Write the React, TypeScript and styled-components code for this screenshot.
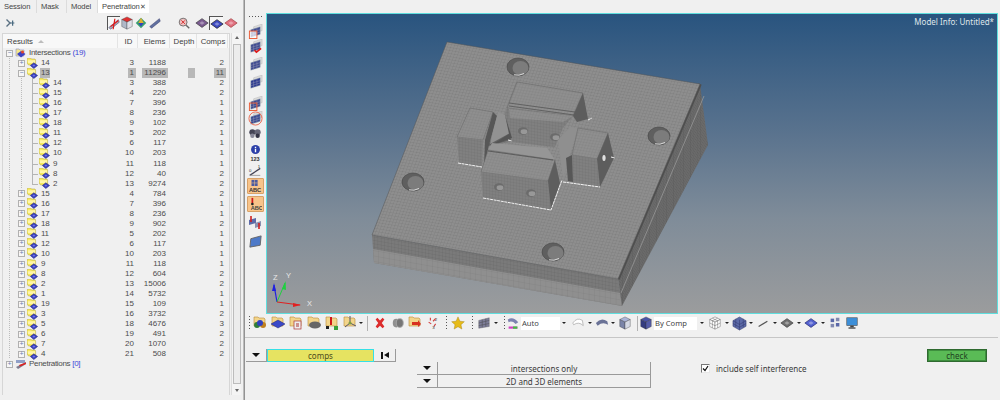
import React from 'react';
import styled, { createGlobalStyle } from 'styled-components';

const Global = createGlobalStyle`
  html, body { margin: 0; padding: 0; background: #f0f0f0; overflow: hidden; }
  #root { width: 1000px; height: 400px; }
`;

const Page = styled.div`
  width: 1000px; height: 400px; display: flex; background: #f0f0f0; overflow: hidden;
  font-family: "Liberation Sans", Arial, sans-serif; color: #4c4c4c;
`;

/* ---------- left panel ---------- */
const LeftPanel = styled.aside`width: 243px; flex: none; display: flex; flex-direction: column;`;
const Splitter = styled.div`width: 2px; flex: none; background: linear-gradient(90deg, #d0d0d0, #7f7f7f);`;
const Tabs = styled.nav`height: 13px; display: flex; background: #f0f0f0; font-size: 7.6px; letter-spacing: -.1px; color: #444;`;
const Tab = styled.div<{ $w: number; $active?: boolean }>`
  width: ${p => p.$w}px; display: flex; align-items: center; justify-content: space-between; flex: none;
  padding: 0 4px 0 4px; box-sizing: border-box;
  background: ${p => (p.$active ? '#fff' : 'transparent')};
  border-right: ${p => (p.$active ? 'none' : '1px solid #dcdcdc')};
`;
const TabClose = styled.span`font-size: 7px;`;
const TabIconRow = styled.div`height: 20px; display: flex; align-items: center; background: #f0f0f0;`;
const IconSlot = styled.span<{ $w: number; $pressed?: boolean }>`
  width: ${p => p.$w}px; height: 14px; flex: none; display: flex; align-items: center; justify-content: center;
  box-sizing: border-box;
  ${p => p.$pressed && 'border-left: 1px solid #555; border-top: 1px solid #555; background: #f7f7f7;'}
`;
const ResultsArea = styled.div`flex: 1; display: flex; padding: 0 2px 5px 2px; min-height: 0;`;
const TreeBox = styled.div`flex: 1; border: 1px solid #d6d6d6; border-bottom: none; display: flex; flex-direction: column; min-width: 0;`;
const HeaderRow = styled.div`
  height: 14px; display: grid; grid-template-columns: 115px 20px 32px 27px 31px 1fr; background: #f8f8f8;
  font-size: 7.8px; color: #3e3e3e; align-items: center;
`;
const HeadCell = styled.div<{ $align?: string }>`
  height: 100%; display: flex; align-items: center; box-sizing: border-box; padding: 0 2px 0 4px;
  justify-content: ${p => p.$align ?? 'center'}; border-right: 1px solid #e4e4e4; gap: 5px;
`;
const SortMark = styled.span`
  width: 0; height: 0; border-left: 3px solid transparent; border-right: 3px solid transparent; border-bottom: 3px solid #bdbdbd;
`;
const Rows = styled.div`flex: 1; background: #f0f0f0;`;
const Row = styled.div`
  height: 10.06px; display: grid; grid-template-columns: 115px 20px 32px 27px 31px 1fr; font-size: 8px; line-height: 10px;
`;
const TreeCell = styled.div`display: flex; align-items: center; height: 10.06px; padding-left: 1px;`;
const Guide = styled.span`
  width: 12px; height: 100%; flex: none;
  background: repeating-linear-gradient(180deg, #bcbcbc 0 1px, transparent 1px 2px) 5px 0 / 1px 100% no-repeat;
`;
const Elbow = styled.span<{ $last?: boolean }>`
  width: 11px; height: 100%; flex: none; position: relative;
  &::before { content: ''; position: absolute; left: 4px; top: 0; width: 1px; height: ${p => (p.$last ? '50%' : '100%')}; background: #b4b4b4; }
  &::after { content: ''; position: absolute; left: 4px; top: 5px; width: 6px; height: 1px; background: #b4b4b4; }
`;
const Expander = styled.span`
  width: 7px; height: 7px; flex: none; margin: 0 2px 0 2px; box-sizing: border-box; border: 1px solid #b0b0b0; background: #f6f6f6;
  display: flex; align-items: center; justify-content: center; font-size: 7px; line-height: 5px; color: #6a7fb0; font-family: "Liberation Mono", monospace;
`;
const TreeLabel = styled.span<{ $sel?: boolean; $ml?: number }>`
  margin-left: ${p => p.$ml ?? 2}px; letter-spacing: -.3px; white-space: nowrap; padding: 0 1px;
  background: ${p => (p.$sel ? '#b8b8b8' : 'transparent')};
`;
const Count = styled.span`color: #3c46d8;`;
const NumCell = styled.div<{ $sel?: boolean }>`
  display: flex; justify-content: flex-end; padding-right: 4px;
  span { padding: 0 ${p => (p.$sel ? 2 : 0)}px; background: ${p => (p.$sel ? '#b8b8b8' : 'transparent')}; margin-right: ${p => (p.$sel ? -2 : 0)}px; min-width: ${p => (p.$sel ? 3 : 0)}px; }
`;
const Scrollbar = styled.div`
  width: 9px; flex: none; margin-left: 1px; display: flex; flex-direction: column; align-items: center; background: #f4f4f4;
  border-left: 1px solid #ddd; font-size: 6px; color: #555;
`;
const ScrollThumb = styled.div`flex: 1; width: 6px; margin: 2px 0; border: 1px solid #bcbcbc; background: #ececec;`;
const ScrollArrow = styled.div<{ $down?: boolean }>`
  width: 0; height: 0; margin: 3px 0; border-left: 2.5px solid transparent; border-right: 2.5px solid transparent;
  ${p => (p.$down ? 'border-top: 3px solid #666;' : 'border-bottom: 3px solid #666;')}
`;

/* ---------- right ---------- */
const RightColumn = styled.main`flex: 1; min-width: 0; display: flex; flex-direction: column;`;
const TopStrip = styled.div`height: 13px; flex: none; background: #f0f0f0;`;
const Stage = styled.div`height: 301px; flex: none; display: flex; padding-right: 2px;`;
const VToolbar = styled.div`width: 21px; flex: none; display: flex; flex-direction: column; align-items: center; padding-right: 1px; box-sizing: border-box;`;
const Handle = styled.div<{ $vertical?: boolean }>`
  flex: none;
  ${p => (p.$vertical
    ? 'width: 1px; height: 14px; background: repeating-linear-gradient(180deg,#555 0 1px,transparent 1px 3px);'
    : 'width: 13px; height: 1px; margin-top: 3px; background: repeating-linear-gradient(90deg,#555 0 1px,transparent 1px 3px);')}
`;
const VTool = styled.div<{ $mt: number; $orange?: boolean; $h?: number }>`
  width: 17px; height: ${p => p.$h ?? 14}px; margin-top: ${p => p.$mt}px; flex: none; display: flex; align-items: center; justify-content: center;
  box-sizing: border-box; border-radius: 1px;
  ${p => p.$orange && 'background: #f8c48a; border: 1px solid #d9a268;'}
`;
const SmallNum = styled.div`font-size: 5.5px; font-weight: 700; color: #333; margin-top: 0; line-height: 7px;`;
const Viewport = styled.div`
  flex: 1; position: relative; border: 1px solid #5fdede; box-sizing: border-box;
  background: linear-gradient(180deg, #29547f 0%, #5a738e 40%, #7f8c99 68%, #9b9c9d 100%);
`;
const ModelSvg = styled.svg`display: block; width: 100%; height: 100%;`;
const ModelInfo = styled.div`
  position: absolute; right: 3px; top: 2px; font-family: "Noto Sans", sans-serif; font-size: 8px; line-height: 12px; color: #dfe5ea;
`;
const HToolbar = styled.div`
  height: 24px; flex: none; margin: 0 2px 0 0; display: flex; align-items: center; padding: 0 0 5px 4px; box-sizing: border-box; border-bottom: 1px solid #c6c6c6;
`;
const Slot = styled.span<{ $w: number }>`width: ${p => p.$w}px; flex: none; height: 16px; display: flex; align-items: center; justify-content: center;`;
const Caret = styled.span<{ $w?: number }>`
  width: ${p => p.$w ?? 8}px; flex: none; height: 10px; display: flex; align-items: center; justify-content: center;
  &::before { content: ''; border-left: 2px solid transparent; border-right: 2px solid transparent; border-top: 2px solid #222; }
`;
const Sep = styled.span<{ $l?: number; $r?: number }>`width: 1px; height: 15px; margin: 0 ${p => p.$r ?? 3}px 0 ${p => p.$l ?? 3}px; background: #b2b2b2; flex: none;`;
const Select = styled.span<{ $w: number }>`
  width: ${p => p.$w}px; height: 13px; flex: none; background: #fff; font-size: 7.6px; display: flex; align-items: center; padding-left: 1px; box-sizing: border-box; color: #444; font-family: "Noto Sans", sans-serif;
`;
const Form = styled.section`
  flex: 1; display: grid; grid-template-columns: 172px 234px 50px 1fr; grid-template-rows: 13px 13px 13px; padding-top: 11px; font-family: "Noto Sans", sans-serif; font-size: 8px; color: #3a3a3a;
`;
const CompsGroup = styled.div`display: flex; height: 13px; grid-column: 1; grid-row: 1; margin-left: 1px;`;
const RaisedButton = styled.button<{ $w?: number }>`
  width: ${p => (p.$w ? `${p.$w}px` : 'auto')}; flex: ${p => (p.$w ? 'none' : '1')}; height: 13px; padding: 0; margin: 0; display: flex; align-items: center; justify-content: center;
  background: #f0f0f0; border: none; border-right: 1px solid #9a9a9a; border-bottom: 1px solid #9a9a9a;
  font: inherit; color: inherit; box-sizing: border-box;
`;
const Arrow = styled.span`border-left: 4px solid transparent; border-right: 4px solid transparent; border-top: 4px solid #111;`;
const Rewind = styled.span`display: flex; align-items: center; gap: 1px;
  &::before { content: ''; width: 2px; height: 7px; background: #111; }
  &::after { content: ''; border-top: 3.5px solid transparent; border-bottom: 3.5px solid transparent; border-right: 5px solid #111; }
`;
const CompsField = styled.div`
  width: 107px; flex: none; height: 13px; box-sizing: border-box; background: #e6e361; border: 1px solid #35e0e6; display: flex; align-items: center; justify-content: center; color: #4c4c1c;
`;
const ChoiceGroup = styled.div<{ $row: number }>`display: flex; grid-column: 2; grid-row: ${p => p.$row}; height: 13px;`;
const CheckCol = styled.div`grid-column: 4; grid-row: 1 / 4; display: grid; grid-template-rows: 13px 13px; grid-template-columns: 1fr 60px; padding-right: 13px;`;
const CheckRow = styled.label`grid-column: 1; grid-row: 2; display: flex; align-items: center; gap: 6px;`;
const CheckBox = styled.span`
  width: 9px; height: 9px; flex: none; background: #fff; box-sizing: border-box; border-left: 1px solid #777; border-top: 1px solid #777; border-right: 1px solid #e8e8e8; border-bottom: 1px solid #e8e8e8;
  display: flex; align-items: center; justify-content: center;
`;
const CheckButton = styled.button`
  grid-column: 2; grid-row: 1; height: 13px; width: 60px; padding: 0; background: #5abb56; border: 1px solid #2f6a30; box-shadow: inset 0 0 0 1px #3e8f3e; font: inherit; color: #1f3f1f; display: flex; align-items: center; justify-content: center;
`;

/* ---------- icons ---------- */
const Ic = styled.svg`display: block; flex: none;`;
const I: React.FC<{ s?: number; children: React.ReactNode }> = ({ s = 14, children }) => (
  <Ic width={s} height={s} viewBox="0 0 16 16">{children}</Ic>
);
const Folder: React.FC = () => (
  <Ic width="11" height="11" viewBox="0 0 11 11">
    <path d="M0 1 1 0h2.500l1 1H8l.6 1v5H1.500L0 5z" fill="#f6ea62" stroke="#a99d42" strokeWidth=".5" />
    <path d="M.6 2.300h7.500V5H1z" fill="#fff6a8" />
    <path d="M6.800 4.800 10.600 7.500 6.800 10.500 3.400 7.500z" fill="#3a41c2" stroke="#20246e" strokeWidth=".5" />
    <path d="M6.800 6.400 8.400 7.500 6.800 8.800 5.400 7.500z" fill="#6d72e4" />
  </Ic>
);
const RootIcon: React.FC = () => (
  <Ic width="12" height="11" viewBox="0 0 12 11">
    <path d="M1 1h3l1 1h4v6H1z" fill="#f5e88a" stroke="#9c9cc8" strokeWidth=".7" />
    <path d="M6 3 10.500 6 6 9.600 2 6z" fill="#3b42c4" />
    <circle cx="7.500" cy="4" r="1.500" fill="#e2462c" />
  </Ic>
);
const PenIcon: React.FC = () => (
  <Ic width="12" height="11" viewBox="0 0 12 11">
    <rect x="1" y="1" width="9" height="3" fill="#8fa0c8" />
    <path d="M1 8 11 3v2L3 10z" fill="#7d7d90" />
    <path d="M4 6 11 3.500v1.600L5 7.400z" fill="#e02020" />
  </Ic>
);
const Plate: React.FC<{ c?: string; r?: boolean }> = ({ c = '#4a54b8', r }) => (
  <I>
    <path d="M2 12 13 3l1 3L4 14z" fill={c} stroke="#262a5c" strokeWidth=".5" />
    {r && <path d="M4 11 13 4M9 2 7 14" stroke="#e01818" strokeWidth="1.400" />}
  </I>
);
const Diamond: React.FC<{ c: string; d: string }> = ({ c, d }) => (
  <I>
    <path d="M8 3 15 8 8 13 1 8z" fill={c} stroke={d} strokeWidth=".8" />
    <path d="M8 6 11 8 8 10 5 8z" fill="#fff" opacity=".35" />
  </I>
);
const Cube: React.FC<{ t: string; l: string; r: string; mesh?: boolean }> = ({ t, l, r, mesh }) => (
  <I>
    <path d="M8 1 14 4 8 7 2 4z" fill={t} stroke="#333" strokeWidth=".4" />
    <path d="M2 4 8 7v8L2 12z" fill={l} stroke="#333" strokeWidth=".4" />
    <path d="M14 4 8 7v8l6-3z" fill={r} stroke="#333" strokeWidth=".4" />
    {mesh && <path d="M2 8l6 3 6-3M5 2.500 11 5.500M11 2.500 5 5.500M5 5.500v8M11 5.500v8" stroke="#333" strokeWidth=".4" fill="none" />}
  </I>
);
const FolderTool: React.FC<{ children: React.ReactNode }> = ({ children }) => (
  <I s={16}>
    <path d="M2 2h4l1 1h5l1 1v7H2z" fill="#f3d58a" stroke="#b88a3a" strokeWidth=".6" />
    {children}
  </I>
);
const PanelFlag: React.FC<{ c?: string; mark?: 'box' | 'check' | 'ring' | 'boxb' }> = ({ c = '#3d4a90', mark }) => (
  <I s={15}>
    <path d="M6 3 15 0v7L6 10z" fill="#dcdcdc" stroke="#aaa" strokeWidth=".4" />
    <path d="M3 6 13 3v8L3 14z" fill={c} stroke="#9aa" strokeWidth=".4" />
    <path d="M3 9 13 6M3 11.500 13 8.500M6 5v8M9.500 4v8" stroke="#aab" strokeWidth=".4" />
    {mark === 'box' && <rect x="1.500" y="7.500" width="8" height="8" fill="#fff" fillOpacity=".7" stroke="#ea5a34" strokeWidth="1" />}
    {mark === 'boxb' && <rect x="1.500" y="7.500" width="8" height="8" fill="none" stroke="#ea5a34" strokeWidth="1" />}
    {mark === 'check' && <path d="M7 12l2 2 5-4" fill="none" stroke="#e01818" strokeWidth="1.800" />}
    {mark === 'ring' && <circle cx="8" cy="8" r="7" fill="none" stroke="#ea6a50" strokeWidth="1" />}
  </I>
);
const Mono = () => (
  <I s={15}>
    <path d="M8 1 15 5v6l-7 4-7-4V5z" fill="#5c6aa8" stroke="#2c3468" strokeWidth=".5" />
    <path d="M1 8l7 4 7-4M8 4v11M4 3v9M12 3v9M1 5l7 4 7-4" stroke="#2c3468" strokeWidth=".5" fill="none" />
  </I>
);

/* ---------- data ---------- */
type R = [string, number, number, number];
const kids: R[] = [['14', 3, 388, 2], ['15', 4, 220, 2], ['16', 7, 396, 1], ['17', 8, 236, 1], ['18', 9, 102, 2], ['11', 5, 202, 1], ['12', 6, 117, 1], ['10', 10, 203, 1], ['9', 11, 118, 1], ['8', 12, 40, 2], ['2', 13, 9274, 2]];
const tail: R[] = [['15', 4, 784, 2], ['16', 7, 396, 1], ['17', 8, 236, 1], ['18', 9, 902, 2], ['11', 5, 202, 1], ['12', 6, 117, 1], ['10', 10, 203, 1], ['9', 11, 118, 1], ['8', 12, 604, 2], ['2', 13, 15006, 2], ['1', 14, 5732, 1], ['19', 15, 109, 1], ['3', 16, 3732, 2], ['5', 18, 4676, 3], ['6', 19, 491, 2], ['7', 20, 1070, 2], ['4', 21, 508, 2]];

const Nums: React.FC<{ r: R; sel?: boolean }> = ({ r, sel }) => (
  <>
    <NumCell $sel={sel}><span>{r[1]}</span></NumCell>
    <NumCell $sel={sel}><span>{r[2]}</span></NumCell>
    <NumCell $sel={sel}><span>{sel ? '\u00a0' : ''}</span></NumCell>
    <NumCell $sel={sel}><span>{r[3]}</span></NumCell>
    <div />
  </>
);
const Branch: React.FC<{ r: R; sel?: boolean; open?: boolean }> = ({ r, sel, open }) => (
  <Row>
    <TreeCell>
      <Guide /><Expander>{open ? '−' : '+'}</Expander><Folder /><TreeLabel $sel={sel}>{r[0]}</TreeLabel>
    </TreeCell>
    <Nums r={r} sel={sel} />
  </Row>
);
const Leaf: React.FC<{ r: R; last?: boolean }> = ({ r, last }) => (
  <Row>
    <TreeCell>
      <Guide /><Guide /><Elbow $last={last} /><Folder /><TreeLabel>{r[0]}</TreeLabel>
    </TreeCell>
    <Nums r={r} />
  </Row>
);

const P = 'M447 42 700 84 618 279 372 235Z';
const Mesh: React.FC<{ id: string; base: string; line: string; size: number; m: string; w?: number }> = ({ id, base, line, size, m, w = .35 }) => (
  <pattern id={id} width={size} height={size} patternUnits="userSpaceOnUse" patternTransform={m}>
    <rect width={size} height={size} fill={base} />
    <path d={`M0 0H${size}M0 0V${size}`} stroke={line} strokeWidth={w} />
  </pattern>
);
const Hole: React.FC<{ x: number; y: number; rx?: number; ry?: number }> = ({ x, y, rx = 11, ry = 9 }) => (
  <g>
    <ellipse cx={x} cy={y} rx={rx} ry={ry} fill="#5f5f5f" stroke="#454545" strokeWidth=".6" />
    <ellipse cx={x + 2.500} cy={y + 1} rx={rx - 3} ry={ry - 2} fill="#7c7c7c" />
    <path d={`M${x - 4} ${y + ry - 1.200} Q${x + 1} ${y + ry + .2} ${x + 6} ${y + ry - 2.500}`} stroke="#e8e8e8" strokeWidth=".9" fill="none" />
  </g>
);
const Bolt: React.FC<{ x: number; y: number }> = ({ x, y }) => (
  <g>
    <ellipse cx={x} cy={y} rx={5} ry={3.800} fill="#6b6b6b" />
    <ellipse cx={x + 1} cy={y + .7} rx={3.400} ry={2.400} fill="#989898" />
  </g>
);
const Model: React.FC = () => (
  <ModelSvg viewBox="267 14 730 299" preserveAspectRatio="none">
    <defs>
      <Mesh id="mt" base="#8e8e8e" line="#6c6c6c" size={3.100} m="matrix(1 .166 -.36 .93 0 0)" />
      <Mesh id="ms" base="#7a7a7a" line="#5e5e5e" size={3.400} m="matrix(1 .178 0 1 0 0)" />
      <Mesh id="ml" base="#8f8f8f" line="#6f6f6f" size={5.400} m="matrix(1 .178 0 1 0 0)" />
      <Mesh id="mr" base="#6a6a6a" line="#515151" size={3.400} m="matrix(1 -2 0 1 0 0)" />
      <Mesh id="bt" base="#8f8f8f" line="#727272" size={2.900} m="matrix(1 .15 -.36 .93 0 0)" />
      <Mesh id="bf" base="#808080" line="#696969" size={3} m="matrix(1 .15 0 1 0 0)" />
    </defs>
    <path d="M372 235 618 279 622 306 374 263Z" fill="url(#ms)" />
    <path d="M373 249 620 293 622 306 374 263Z" fill="url(#ml)" />
    <path d="M700 84 708 145 622 306 618 279Z" fill="url(#mr)" />
    <path d="M704 96 621 293" stroke="#989898" strokeWidth=".8" />
    <path d="M700 84 618 279" stroke="#4e4e4e" strokeWidth="3.500" />
    <path d={P} fill="url(#mt)" stroke="#555" strokeWidth=".5" />
    <Hole x={518} y={67} />
    <Hole x={659} y={136} />
    <Hole x={413} y={182} />
    <Hole x={553} y={252} />
    {/* back block */}
    <path d="M517 82 583 93 573 116 507 108Z" fill="url(#bt)" stroke="#555" strokeWidth=".4" />
    <path d="M509 103 575 112M509 106 574 115" stroke="#5c5c5c" strokeWidth=".9" />
    <path d="M507 108 573 116 563 128 555 147 510 142 488 146 503 118Z" fill="url(#bf)" />
    <path d="M509 109 573 116 563 122 510 118Z" fill="url(#bt)" />
    <path d="M583 93 588 119 577 122 573 116Z" fill="#5d5d5d" />
    <path d="M503 118 511 140 488 146 490 142 Z" fill="#626262" />
    <Bolt x={523} y={131} />
    <Bolt x={555} y={137} />
    {/* left block */}
    <path d="M470 108 493 112 483 140 457 137Z" fill="url(#bt)" stroke="#5a5a5a" strokeWidth=".4" />
    <path d="M457 137 483 140 482 167 459 163Z" fill="url(#bf)" />
    <path d="M493 112 485 140 484 167 489 145 497 116Z" fill="#575757" />
    <path d="M498 112 505 115 510 133 490 144 494 128Z" fill="#929292" />
    <path d="M505 115 512 138 490 146 509 134Z" fill="#545454" />
    {/* right block */}
    <path d="M570 127 578 128 563 178 558 140Z" fill="#8f8f8f" />
    <path d="M578 128 608 133 597 159 572 155Z" fill="url(#bt)" stroke="#5a5a5a" strokeWidth=".4" />
    <path d="M572 155 597 159 600 187 573 182Z" fill="url(#bf)" />
    <path d="M608 133 614 158 600 187 597 159Z" fill="#5d5d5d" />
    <path d="M566 158 572 155 573 182 568 181Z" fill="#575757" />
    <ellipse cx={604} cy={158} rx={2.200} ry={3.600} fill="#dfdfdf" stroke="#444" strokeWidth=".8" />
    {/* front block */}
    <path d="M492 143 547 148 555 160 488 150Z" fill="#969696" />
    <path d="M488 150 555 160 548 181 481 172Z" fill="url(#bt)" stroke="#5a5a5a" strokeWidth=".4" />
    <path d="M488 151 553 160" stroke="#5c5c5c" strokeWidth="1.100" />
    <path d="M481 172 548 181 551 210 483 199Z" fill="url(#bf)" />
    <path d="M555 160 548 181 551 210 560 183Z" fill="#5e5e5e" />
    <Bolt x={499} y={187} />
    <Bolt x={531} y={193} />
    <path d="M458 163 482 167M483 198 551 210 562 180M563 182 600 187M588 120 592 118M611 157 615 158M508 140 512 141" stroke="#f2f2f2" strokeWidth="1" fill="none" strokeDasharray="3 .6" />
    {/* triad */}
    <path d="M277 302 274 285" stroke="#2020e0" strokeWidth="1.200" />
    <path d="M274 283 272 291 276 291Z" fill="#2020e0" />
    <path d="M277 302 285 283" stroke="#1fd040" strokeWidth="1" />
    <path d="M285.500 281 282 289 286 290Z" fill="#1fd040" />
    <path d="M277 302 300 305" stroke="#e02020" strokeWidth="1" />
    <path d="M301 305 293 303 293 307Z" fill="#e02020" />
    <text x="273" y="280" fontSize="7.500" fill="#e8e8e8" fontFamily="Liberation Sans">Z</text>
    <text x="286" y="278" fontSize="7.500" fill="#e8e8e8" fontFamily="Liberation Sans">Y</text>
    <text x="307" y="306" fontSize="7.500" fill="#e8e8e8" fontFamily="Liberation Sans">X</text>
  </ModelSvg>
);

export default function App() {
  return (
    <Page>
      <Global />
      <LeftPanel>
        <Tabs>
          <Tab $w={37}>Session</Tab>
          <Tab $w={30}>Mask</Tab>
          <Tab $w={31}>Model</Tab>
          <Tab $w={51} $active>Penetration <TabClose>✕</TabClose></Tab>
        </Tabs>
        <TabIconRow>
          <IconSlot $w={20}><I><path d="M4 4 8 8 4 12" stroke="#5a7082" strokeWidth="1.600" fill="none" /><path d="M8 8h5M11 5v6" stroke="#4a6a80" strokeWidth="1.400" /></I></IconSlot>
          <IconSlot $w={87} />
          <IconSlot $w={13} $pressed><Plate c="#a8a8b8" r /></IconSlot>
          <IconSlot $w={14}><Cube t="#e03030" l="#b0b8c8" r="#e0e0e8" /></IconSlot>
          <IconSlot $w={14}><I><path d="M8 2 14 8 8 14 2 8z" fill="#3aa070" /><path d="M8 2l3 6H5z" fill="#e0b030" /><path d="M5 8h6L8 12z" fill="#3040c0" /></I></IconSlot>
          <IconSlot $w={14}><Plate c="#6070a0" /></IconSlot>
          <IconSlot $w={14} />
          <IconSlot $w={16}><I><circle cx="7" cy="7" r="4.500" fill="#f0c0c0" stroke="#666" /><path d="M5 5l4 4M9 5 5 9" stroke="#d02020" /><path d="M10.500 10.500 14 14" stroke="#666" strokeWidth="1.600" /></I></IconSlot>
          <IconSlot $w={3} />
          <IconSlot $w={14}><Diamond c="#7a5a90" d="#444" /></IconSlot>
          <IconSlot $w={14} $pressed><Diamond c="#3d4ac0" d="#222" /></IconSlot>
          <IconSlot $w={15}><Diamond c="#e07080" d="#a04040" /></IconSlot>
        </TabIconRow>
        <ResultsArea>
          <TreeBox>
            <HeaderRow>
              <HeadCell $align="flex-start">Results <SortMark /></HeadCell>
              <HeadCell>ID</HeadCell>
              <HeadCell>Elems</HeadCell>
              <HeadCell>Depth</HeadCell>
              <HeadCell>Comps</HeadCell>
              <div />
            </HeaderRow>
            <Rows>
              <Row>
                <TreeCell>
                  <Expander>−</Expander><RootIcon /><TreeLabel $ml={1}>Intersections <Count>(19)</Count></TreeLabel>
                </TreeCell>
              </Row>
              <Branch r={['14', 3, 1188, 2]} />
              <Branch r={['13', 1, 11296, 11]} sel open />
              {kids.map((r, i) => <Leaf key={i} r={r} last={i === kids.length - 1} />)}
              {tail.map((r, i) => <Branch key={i} r={r} />)}
              <Row>
                <TreeCell>
                  <Expander>+</Expander><PenIcon /><TreeLabel $ml={1}>Penetrations <Count>[0]</Count></TreeLabel>
                </TreeCell>
              </Row>
            </Rows>
          </TreeBox>
          <Scrollbar>
            <ScrollArrow />
            <ScrollThumb />
            <ScrollArrow $down />
          </Scrollbar>
        </ResultsArea>
      </LeftPanel>
      <Splitter />
      <RightColumn>
        <TopStrip />
        <Stage>
          <VToolbar>
            <Handle />
            <VTool $mt={7}><PanelFlag mark="box" /></VTool>
            <VTool $mt={1}><PanelFlag mark="check" /></VTool>
            <VTool $mt={4}><PanelFlag /></VTool>
            <VTool $mt={4}><PanelFlag c="#2c3a90" /></VTool>
            <VTool $mt={7}><PanelFlag mark="boxb" /></VTool>
            <VTool $mt={1}><PanelFlag c="#3a4a90" mark="ring" /></VTool>
            <VTool $mt={2}><I><circle cx="5" cy="6" r="3.500" fill="#445" /><circle cx="11" cy="6" r="3.500" fill="#667" /><circle cx="5" cy="10" r="2.500" fill="#889" /><circle cx="11" cy="10" r="2.500" fill="#334" /></I></VTool>
            <VTool $mt={1} $h={14}><I s={11}><circle cx="8" cy="8" r="6.500" fill="#2b3fa8" /><rect x="7" y="7" width="2" height="5" fill="#fff" /><rect x="7" y="4" width="2" height="2" fill="#fff" /></I></VTool>
            <SmallNum>123</SmallNum>
            <VTool $mt={1}><I><path d="M2 13 14 5" stroke="#445" strokeWidth="1.400" /><path d="M2 13h12" stroke="#999" /><text x="1" y="9" fontSize="5" fill="#333" fontFamily="Liberation Sans">0</text><text x="11" y="4" fontSize="5" fill="#333" fontFamily="Liberation Sans">1</text></I></VTool>
            <VTool $mt={0} $orange $h={16}><I><rect x="4" y="1" width="7" height="7" fill="#4a5aa0" /><path d="M7.500 1v7M4 4.500h7" stroke="#f8c48a" strokeWidth=".6" /><text x="1" y="14.500" fontSize="6.500" fontWeight="700" fill="#333" fontFamily="Liberation Sans">ABC</text></I></VTool>
            <VTool $mt={2} $orange $h={16}><I><path d="M5 1v6" stroke="#d01818" strokeWidth="2" /><circle cx="5" cy="8" r="1.500" fill="#222" /><text x="3" y="14.500" fontSize="6.500" fontWeight="700" fill="#444" fontFamily="Liberation Sans">ABC</text></I></VTool>
            <VTool $mt={3}><I s={16}><path d="M2 6 9 4v5l-7 2z" fill="#5c6aa8" /><path d="M8 9l6-2v5l-6 2z" fill="#8a90b0" /><path d="M4 2v6M12 9v6" stroke="#d02020" strokeWidth="1.600" /></I></VTool>
            <VTool $mt={5}><I s={15}><path d="M3 5 14 2 13 12 2 14z" fill="#4d79c8" stroke="#666" /></I></VTool>
          </VToolbar>
          <Viewport>
            <Model />
            <ModelInfo>Model Info: Untitled*</ModelInfo>
          </Viewport>
        </Stage>
        <HToolbar>
          <Handle $vertical />
          <Slot $w={1} />
          <Slot $w={18}><FolderTool><circle cx="5" cy="10" r="3" fill="#2f7d3a" /><circle cx="11" cy="10" r="3" fill="#c08020" /><circle cx="8" cy="8" r="3" fill="#3040c0" /></FolderTool></Slot>
          <Slot $w={18}><FolderTool><path d="M8 5 15 9 8 13 1 9z" fill="#3a48c8" stroke="#1c2270" strokeWidth=".5" /></FolderTool></Slot>
          <Slot $w={18}><FolderTool><rect x="6" y="6" width="7" height="8" fill="#eee" stroke="#a33" strokeWidth=".7" /><path d="M8 9h3M8 11h3" stroke="#a33" /></FolderTool></Slot>
          <Slot $w={18}><FolderTool><ellipse cx="9" cy="10" rx="6" ry="3.500" fill="#666" /></FolderTool></Slot>
          <Slot $w={18}><FolderTool><path d="M7 2v8" stroke="#d01818" strokeWidth="2" /><rect x="2" y="11" width="3" height="3" fill="#222" /><rect x="10" y="11" width="4" height="4" fill="#3aa03a" /></FolderTool></Slot>
          <Slot $w={17}><FolderTool><path d="M8 8V1M8 8l6 3M8 8l-5 4" stroke="#556" strokeWidth="1" /><circle cx="8" cy="8" r="1.500" fill="#80a040" /></FolderTool></Slot>
          <Caret $w={6} />
          <Sep />
          <Slot $w={18}><I><path d="M3 4 5 2 8 5 11 2 13 4 10 8 13 12 11 14 8 11 5 14 3 12 6 8z" fill="#dc2c2c" /></I></Slot>
          <Slot $w={17}><I><ellipse cx="6" cy="8" rx="4" ry="5" fill="#909090" /><ellipse cx="10" cy="8" rx="4" ry="5" fill="#767676" stroke="#a8a8a8" /></I></Slot>
          <Slot $w={18}><FolderTool><path d="M5 7h6v-2l3 4-3 3v-2H5z" fill="#d83020" /></FolderTool></Slot>
          <Slot $w={18}><I><path d="M5 2v3M11 3l-3 3M3 7l3 2M11 9l-2 3" stroke="#d04040" strokeWidth="1.300" /><text x="10" y="6" fontSize="5" fill="#333" fontFamily="Liberation Sans">2</text><text x="7" y="15" fontSize="5" fill="#333" fontFamily="Liberation Sans">3</text></I></Slot>
          <Slot $w={4} />
          <Handle $vertical />
          <Slot $w={3} />
          <Slot $w={16}><I><path d="M8 1l2.200 5 5 .5-3.800 3.400 1 5-4.400-2.700-4.400 2.700 1-5L.8 6.500l5-.5z" fill="#e6bb18" stroke="#a88410" strokeWidth=".5" /></I></Slot>
          <Slot $w={6} />
          <Handle $vertical />
          <Slot $w={3} />
          <Slot $w={16}><I><path d="M2 5 14 2v10L2 14z" fill="#7d7d98" stroke="#555" strokeWidth=".4" /><path d="M2 8 14 5M2 11 14 8.500M6 4v9M10 3v9" stroke="#444" strokeWidth=".5" /></I></Slot>
          <Caret $w={8} />
          <Slot $w={4} />
          <Handle $vertical />
          <Slot $w={16}><I><path d="M2 4Q8 0 14 7L11 9Q7 5 3 7z" fill="#7d82b0" /><rect x="3" y="12" width="10" height="2.500" fill="#d040c0" /><rect x="8" y="12" width="5" height="2.500" fill="#40c040" /></I></Slot>
          <Select $w={39}>Auto</Select>
          <Caret $w={8} />
          <Slot $w={2} />
          <Slot $w={16}><I><path d="M2 8Q7 1 13 5L14 11Q9 6 3 10z" fill="#fff" stroke="#999" strokeWidth=".7" /></I></Slot>
          <Caret $w={8} />
          <Slot $w={16}><I><path d="M1 8Q7 1 14 6l1 4Q9 6 3 11z" fill="#6a7296" /></I></Slot>
          <Caret $w={6} />
          <Slot $w={18}><Cube t="#aab4d8" l="#7a84a8" r="#d4d8e4" /></Slot>
          <Sep $r={0} />
          <Slot $w={16}><Cube t="#4a54a8" l="#343c80" r="#545ca8" /></Slot>
          <Select $w={43}>By Comp</Select>
          <Caret $w={10} />
          <Slot $w={16}><Cube t="#fff" l="#fff" r="#fff" mesh /></Slot>
          <Caret $w={8} />
          <Slot $w={16}><Mono /></Slot>
          <Caret $w={8} />
          <Slot $w={16}><I><path d="M3 12 13 6" stroke="#555" strokeWidth="1.400" /></I></Slot>
          <Caret $w={8} />
          <Slot $w={16}><Diamond c="#6e6e6e" d="#444" /></Slot>
          <Caret $w={8} />
          <Slot $w={16}><Diamond c="#5260d0" d="#262c70" /></Slot>
          <Caret $w={8} />
          <Slot $w={16}><I><rect x="3" y="3" width="4" height="4" fill="#5a68a8" /><rect x="9" y="2" width="4" height="4" fill="#8088b0" /><rect x="3" y="9" width="4" height="4" fill="#8088b0" /><rect x="9" y="8" width="4" height="4" fill="#5a68a8" /></I></Slot>
          <Slot $w={18}><I><rect x="2" y="2" width="12" height="9" fill="#3d8fd8" stroke="#555" strokeWidth=".7" /><rect x="6" y="11" width="4" height="2" fill="#444" /><rect x="4" y="13" width="8" height="1.500" fill="#444" /></I></Slot>
        </HToolbar>
        <Form>
          <CompsGroup>
            <RaisedButton $w={21}><Arrow /></RaisedButton>
            <CompsField>comps</CompsField>
            <RaisedButton $w={22}><Rewind /></RaisedButton>
          </CompsGroup>
          <ChoiceGroup $row={2}>
            <RaisedButton $w={21}><Arrow /></RaisedButton>
            <RaisedButton>intersections only</RaisedButton>
          </ChoiceGroup>
          <ChoiceGroup $row={3}>
            <RaisedButton $w={21}><Arrow /></RaisedButton>
            <RaisedButton>2D and 3D elements</RaisedButton>
          </ChoiceGroup>
          <CheckCol>
            <CheckRow>
              <CheckBox><Ic width="7" height="7" viewBox="0 0 7 7"><path d="M1 3.500 3 5.500 6 1" stroke="#111" strokeWidth="1.200" fill="none" /></Ic></CheckBox>
              include self interference
            </CheckRow>
            <CheckButton>check</CheckButton>
          </CheckCol>
        </Form>
      </RightColumn>
    </Page>
  );
}
